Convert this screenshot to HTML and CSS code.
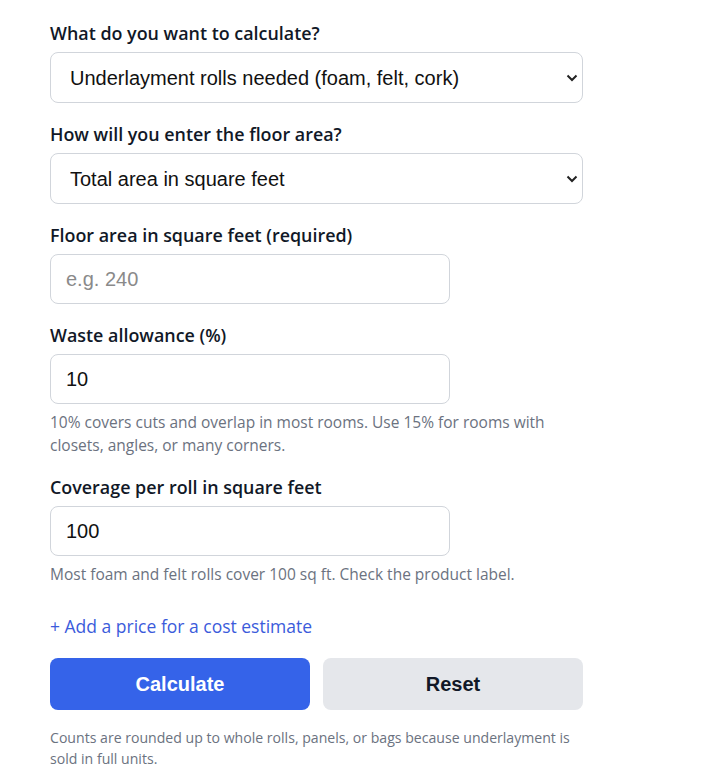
FILE: index.html
```html
<!DOCTYPE html>
<html lang="en">
<head>
    <meta charset="UTF-8">
    <meta name="viewport" content="width=device-width, initial-scale=1.0">
    <title>Underlayment Calculator</title>
    <link rel="stylesheet" href="styles.css">
</head>
<body>
    <div class="calculator">
        <form id="calcForm">
            <div class="field">
                <label for="calcType">What do you want to calculate?</label>
                <div class="select-wrap">
                    <select id="calcType">
                        <option>Underlayment rolls needed (foam, felt, cork)</option>
                        <option>Underlayment panels needed</option>
                        <option>Self-leveler bags needed</option>
                    </select>
                    <svg class="chevron" width="12" height="8" viewBox="0 0 12 8"><path d="M1.5 1.5 L6 6 L10.5 1.5" fill="none" stroke="#222" stroke-width="2"/></svg>
                </div>
            </div>

            <div class="field">
                <label for="areaMode">How will you enter the floor area?</label>
                <div class="select-wrap">
                    <select id="areaMode">
                        <option>Total area in square feet</option>
                        <option>Room length and width</option>
                    </select>
                    <svg class="chevron" width="12" height="8" viewBox="0 0 12 8"><path d="M1.5 1.5 L6 6 L10.5 1.5" fill="none" stroke="#222" stroke-width="2"/></svg>
                </div>
            </div>

            <div class="field">
                <label for="area">Floor area in square feet (required)</label>
                <input type="number" id="area" placeholder="e.g. 240">
            </div>

            <div class="field has-hint">
                <label for="waste">Waste allowance (%)</label>
                <input type="number" id="waste" value="10">
                <p class="hint">10% covers cuts and overlap in most rooms. Use 15% for rooms with closets, angles, or many corners.</p>
            </div>

            <div class="field has-hint">
                <label for="coverage">Coverage per roll in square feet</label>
                <input type="number" id="coverage" value="100">
                <p class="hint">Most foam and felt rolls cover 100 sq ft. Check the product label.</p>
            </div>

            <a href="#" class="add-price">+ Add a price for a cost estimate</a>

            <div class="actions">
                <button type="submit" class="btn btn-primary">Calculate</button>
                <button type="reset" class="btn btn-secondary">Reset</button>
            </div>

            <p class="note">Counts are rounded up to whole rolls, panels, or bags because underlayment is sold in full units.</p>
        </form>
    </div>
</body>
</html>
```

FILE: styles.css
```css
body {
    font-family: "Open Sans", "Noto Sans", Arial, sans-serif;
    margin: 0;
    padding: 0;
    background-color: #ffffff;
    color: #111827;
}
.calculator {
    width: 533px;
    padding: 21px 0 0 50px;
}
.field {
    margin-bottom: 19px;
}
.field.has-hint {
    margin-bottom: 18px;
}
label {
    display: block;
    font-size: 17.9px;
    font-weight: 600;
    line-height: 24px;
    margin-bottom: 7px;
}
select, input {
    box-sizing: border-box;
    border: 1px solid #d1d5db;
    border-radius: 8px;
    background-color: #fff;
    font-family: "Liberation Sans", Arial, sans-serif;
    font-size: 20px;
    color: #111;
    outline: none;
}
select {
    width: 100%;
    height: 51px;
    padding: 0 40px 0 19px;
    appearance: none;
    -webkit-appearance: none;
}
input {
    width: 400px;
    height: 50px;
    padding: 0 15px;
    display: block;
}
input::placeholder {
    color: #8a8a8a;
}
input::-webkit-outer-spin-button,
input::-webkit-inner-spin-button {
    -webkit-appearance: none;
    margin: 0;
}
.select-wrap {
    position: relative;
}
.chevron {
    position: absolute;
    right: 5px;
    top: 22px;
    pointer-events: none;
}
.hint {
    margin: 7px 0 0;
    font-size: 15.5px;
    line-height: 23px;
    color: #6b7280;
}
.add-price {
    display: inline-block;
    margin-top: 10px;
    font-size: 17.5px;
    font-weight: 500;
    line-height: 24px;
    color: #3b5bdb;
    text-decoration: none;
}
.actions {
    display: flex;
    gap: 13px;
    margin-top: 20px;
}
.btn {
    flex: 1;
    height: 52px;
    border: none;
    border-radius: 8px;
    font-family: "Liberation Sans", Arial, sans-serif;
    font-size: 20px;
    font-weight: bold;
    cursor: pointer;
}
.btn-primary {
    background-color: #3563e9;
    color: #fff;
}
.btn-secondary {
    background-color: #e5e7eb;
    color: #111827;
}
.note {
    margin: 17px 0 0;
    font-size: 14.1px;
    line-height: 21px;
    color: #6b7280;
}
```
